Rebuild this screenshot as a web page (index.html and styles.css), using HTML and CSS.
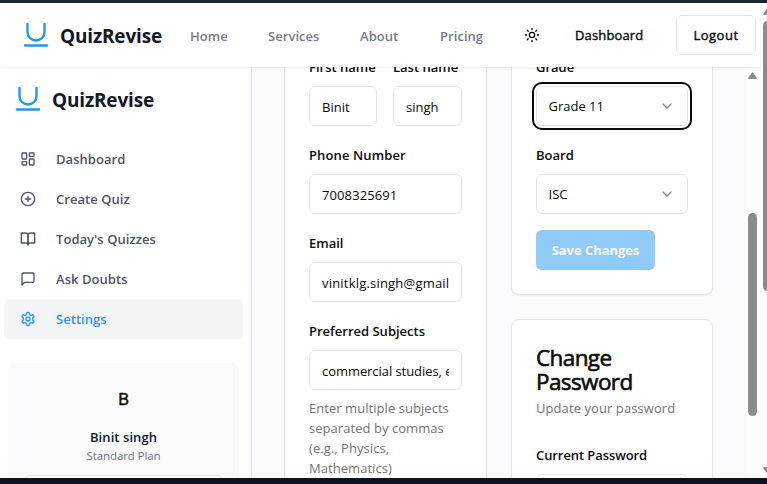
FILE: index.html
```html
<!DOCTYPE html>
<html lang="en">
<head>
<meta charset="utf-8">
<title>QuizRevise</title>
<link rel="stylesheet" href="styles.css">
</head>
<body>
<div class="strip-top"></div>
<div class="viewport">
  <div class="page">
    <header class="header">
      <div class="brand">
        <svg class="logo" viewBox="0 0 24 24"><path d="M3.5 1v8a8.5 8.5 0 0 0 17 0V1"/><path d="M1 22.5h22"/></svg>
        <span class="brand-name">QuizRevise</span>
      </div>
      <nav class="nav">
        <a class="nav-home">Home</a><a class="nav-services">Services</a><a class="nav-about">About</a><a class="nav-pricing">Pricing</a>
      </nav>
      <svg class="icon sun" viewBox="0 0 24 24"><circle cx="12" cy="12" r="4"/><path d="M12 2v2M12 20v2M4.93 4.93l1.41 1.41M17.66 17.66l1.41 1.41M2 12h2M20 12h2M6.34 17.66l-1.41 1.41M19.07 4.93l-1.41 1.41"/></svg>
      <a class="dash-link">Dashboard</a>
      <button class="logout">Logout</button>
    </header>
    <div class="workspace">
      <aside class="sidebar">
        <div class="brand side-brand">
          <svg class="logo" viewBox="0 0 24 24"><path d="M3.5 1v8a8.5 8.5 0 0 0 17 0V1"/><path d="M1 22.5h22"/></svg>
          <span class="brand-name">QuizRevise</span>
        </div>
        <ul class="menu">
          <li class="item"><svg class="icon" viewBox="0 0 24 24"><rect width="7" height="9" x="3" y="3" rx="1"/><rect width="7" height="5" x="14" y="3" rx="1"/><rect width="7" height="9" x="14" y="12" rx="1"/><rect width="7" height="5" x="3" y="16" rx="1"/></svg><span>Dashboard</span></li>
          <li class="item"><svg class="icon" viewBox="0 0 24 24"><circle cx="12" cy="12" r="10"/><path d="M8 12h8M12 8v8"/></svg><span>Create Quiz</span></li>
          <li class="item"><svg class="icon" viewBox="0 0 24 24"><path d="M2 3h6a4 4 0 0 1 4 4v14a3 3 0 0 0-3-3H2z"/><path d="M22 3h-6a4 4 0 0 0-4 4v14a3 3 0 0 1 3-3h7z"/></svg><span>Today's Quizzes</span></li>
          <li class="item"><svg class="icon" viewBox="0 0 24 24"><path d="M21 15a2 2 0 0 1-2 2H7l-4 4V5a2 2 0 0 1 2-2h14a2 2 0 0 1 2 2z"/></svg><span>Ask Doubts</span></li>
          <li class="item active"><svg class="icon" viewBox="0 0 24 24"><path d="M12.22 2h-.44a2 2 0 0 0-2 2v.18a2 2 0 0 1-1 1.73l-.43.25a2 2 0 0 1-2 0l-.15-.08a2 2 0 0 0-2.73.73l-.22.38a2 2 0 0 0 .73 2.73l.15.1a2 2 0 0 1 1 1.72v.51a2 2 0 0 1-1 1.74l-.15.09a2 2 0 0 0-.73 2.73l.22.38a2 2 0 0 0 2.73.73l.15-.08a2 2 0 0 1 2 0l.43.25a2 2 0 0 1 1 1.73V20a2 2 0 0 0 2 2h.44a2 2 0 0 0 2-2v-.18a2 2 0 0 1 1-1.73l.43-.25a2 2 0 0 1 2 0l.15.08a2 2 0 0 0 2.73-.73l.22-.39a2 2 0 0 0-.73-2.73l-.15-.08a2 2 0 0 1-1-1.74v-.5a2 2 0 0 1 1-1.74l.15-.09a2 2 0 0 0 .73-2.73l-.22-.38a2 2 0 0 0-2.73-.73l-.15.08a2 2 0 0 1-2 0l-.43-.25a2 2 0 0 1-1-1.73V4a2 2 0 0 0-2-2z"/><circle cx="12" cy="12" r="3"/></svg><span>Settings</span></li>
        </ul>
        <div class="profile">
          <div class="avatar">B</div>
          <div class="user">Binit singh</div>
          <div class="plan">Standard Plan</div>
          <div class="plan-button"></div>
        </div>
      </aside>
      <main class="content">
        <section class="card personal">
          <div class="pair">
            <div class="field"><label>First name</label><div class="input"><span>Binit</span></div></div>
            <div class="field"><label>Last name</label><div class="input"><span>singh</span></div></div>
          </div>
          <div class="field"><label class="l-phone">Phone Number</label><div class="input"><span class="v-phone">7008325691</span></div></div>
          <div class="field"><label>Email</label><div class="input"><span class="v-email">vinitklg.singh@gmail.com</span></div></div>
          <div class="field"><label>Preferred Subjects</label><div class="input"><span class="v-subjects">commercial studies, economics</span></div></div>
          <p class="hint">Enter multiple subjects<br>separated by commas<br>(e.g., Physics,<br>Mathematics)</p>
        </section>
        <div class="column">
          <section class="card academic">
            <div class="field"><label>Grade</label><div class="input select focused"><span>Grade 11</span><svg class="icon chevron" viewBox="0 0 24 24"><path d="m6 9 6 6 6-6"/></svg></div></div>
            <div class="field"><label>Board</label><div class="input select"><span>ISC</span><svg class="icon chevron" viewBox="0 0 24 24"><path d="m6 9 6 6 6-6"/></svg></div></div>
            <button class="save">Save Changes</button>
          </section>
          <section class="card password">
            <h2>Change<br>Password</h2>
            <p class="subtitle">Update your password</p>
            <div class="field"><label>Current Password</label><div class="input"></div></div>
          </section>
        </div>
      </main>
      <div class="scroll inner"><i class="arrow-up"></i><i class="thumb"></i></div>
    </div>
  </div>
  <div class="scroll outer"><i class="arrow-up"></i><i class="thumb"></i><i class="arrow-down"></i></div>
</div>
<div class="strip-bottom"></div>
</body>
</html>
```
FILE: styles.css
```css
* { box-sizing: border-box; }
body { margin: 0; width: 767px; height: 484px; overflow: hidden; display: flex; flex-direction: column; font: 400 13px/20px "Open Sans", "Noto Sans", sans-serif; color: #0c0a09; }
.strip-top { height: 3px; flex: none; background: #1c2536; }
.strip-bottom { height: 6px; flex: none; background: #0b1220; }
.viewport { flex: none; height: 475px; display: flex; overflow: hidden; background: #fcfcfc; }
.page { width: 760px; flex: none; display: flex; flex-direction: column; }
.header { height: 64px; flex: none; display: flex; align-items: center; padding-left: 24px; background: #fff; z-index: 1; box-shadow: 0 1px 2px rgba(0,0,0,.07); font-weight: 600; }
.brand { display: flex; align-items: center; gap: 12px; }
.logo { width: 24px; height: 24px; fill: none; stroke: #2196f3; stroke-width: 2.4; stroke-linecap: round; overflow: visible; }
.brand-name { padding-top: 2px; font-size: 19px; line-height: 28px; font-weight: 700; letter-spacing: -.17px; color: #111827; width: 102px; white-space: nowrap; }
.nav { display: flex; margin: 2px 0 0 28px; color: #757b89; width: 334px; letter-spacing: .05px; }
.nav-home { width: 78px; }
.nav-services { width: 92px; }
.nav-about { width: 80px; }
.icon { width: 16px; height: 16px; flex: none; fill: none; stroke: currentColor; stroke-width: 2; stroke-linecap: round; stroke-linejoin: round; }
.sun { margin-top: -1px; }
.dash-link { margin-left: 35px; width: 101px; font-weight: 500; letter-spacing: .15px; -webkit-text-stroke: .4px currentColor; }
.logout { width: 80px; height: 40px; border: 1px solid #e5e5e5; border-radius: 6px; background: #fff; font: inherit; font-weight: 500; letter-spacing: .5px; -webkit-text-stroke: .4px currentColor; color: inherit; padding: 0; }
.workspace { height: 411px; display: flex; }
.sidebar { width: 252px; flex: none; border-right: 1px solid #e5e7eb; background: #fff; overflow: hidden; }
.side-brand { padding: 17px 0 0 16px; }
.menu { list-style: none; margin: 25px 8px 0 4px; padding: 0; color: #4b5563; font-weight: 600; letter-spacing: .05px; }
.item { height: 40px; display: flex; align-items: center; gap: 20px; padding-left: 16px; border-radius: 6px; }
.item.active { background: #f3f4f6; color: #2b95f1; }
.profile { margin: 24px 12px 0 8px; height: 160px; background: #f9fafb; border-radius: 8px; text-align: center; padding: 22px 16px 0; }
.avatar { font-size: 17px; line-height: 28px; font-weight: 500; -webkit-text-stroke: .5px currentColor; }
.user { margin-top: 14px; font-weight: 600; color: #111827; letter-spacing: .07px; }
.plan { font-size: 11.5px; line-height: 16px; color: #6b7280; letter-spacing: -.1px; margin-top: 1px; }
.plan-button { margin-top: 11px; height: 32px; border: 1px solid #e5e5e5; border-radius: 6px; background: #fff; }
.content { width: 493px; flex: none; overflow: hidden; background: #f9fafb; padding: 0 32px; display: grid; grid-template-columns: 203px 202px; gap: 24px; align-items: start; }
.card { background: #fff; border: 1px solid #e5e5e5; border-radius: 8px; padding: 24px; box-shadow: 0 1px 2px rgba(0,0,0,.05); }
.personal, .academic { border-top: 0; border-radius: 0 0 8px 8px; padding-top: 0; margin-top: -10px; }
.personal { height: 460px; }
.academic { height: 238px; }
.password { margin-top: 24px; height: 220px; }
.pair { display: grid; grid-template-columns: 68px 69px; gap: 16px; }
.field + .field, .pair + .field { margin-top: 19px; }
.pair .field + .field { margin-top: 0; }
label { display: block; font-weight: 600; line-height: 20px; margin-bottom: 9px; white-space: nowrap; }
.l-phone { letter-spacing: .12px; }
.input { height: 40px; border: 1px solid #e5e5e5; border-radius: 6px; background: #fff; padding: 2px 12px 0; display: flex; align-items: center; }
.input span { overflow: hidden; white-space: nowrap; flex: 1; }
.v-phone { letter-spacing: .1px; }
.v-email { letter-spacing: .2px; }
.v-subjects { letter-spacing: -.06px; }
.select { padding: 0 12px 0 11.5px; }
.focused { outline: 2px solid #0a0a0a; outline-offset: 2px; }
.chevron { color: #858585; }
.hint { margin: 8px 0 0; color: #737373; white-space: nowrap; letter-spacing: .05px; }
.save { margin-top: 16px; width: 119px; height: 40px; border: 0; border-radius: 6px; padding: 0; background: #90caf9; color: #f7fbff; font: inherit; font-weight: 700; letter-spacing: -.05px; }
.password h2 { margin: 2px 0 0; font-size: 22.5px; line-height: 24px; font-weight: 500; letter-spacing: -.6px; -webkit-text-stroke: .6px currentColor; }
.subtitle { margin: 4px 0 27px; color: #737373; letter-spacing: .08px; }
.password label { margin-bottom: 9px; letter-spacing: -.08px; }
.scroll { position: relative; background: #fcfcfc; flex: none; }
.scroll i { position: absolute; background: #8b8b8b; }
.inner { width: 15px; }
.outer { width: 7px; overflow: hidden; }
.thumb { width: 9px; border-radius: 5px; }
.inner .thumb { left: 3px; top: 146px; height: 203px; }
.outer .thumb { left: 3px; top: 18px; height: 270px; }
.arrow-up, .arrow-down { left: 3px; width: 9px; height: 7px; clip-path: polygon(50% 0, 100% 85%, 90% 100%, 10% 100%, 0 85%); }
.inner .arrow-up { top: 5px; }
.outer .arrow-up { top: 5px; }
.arrow-down { top: 464px; transform: scaleY(-1); }
```
